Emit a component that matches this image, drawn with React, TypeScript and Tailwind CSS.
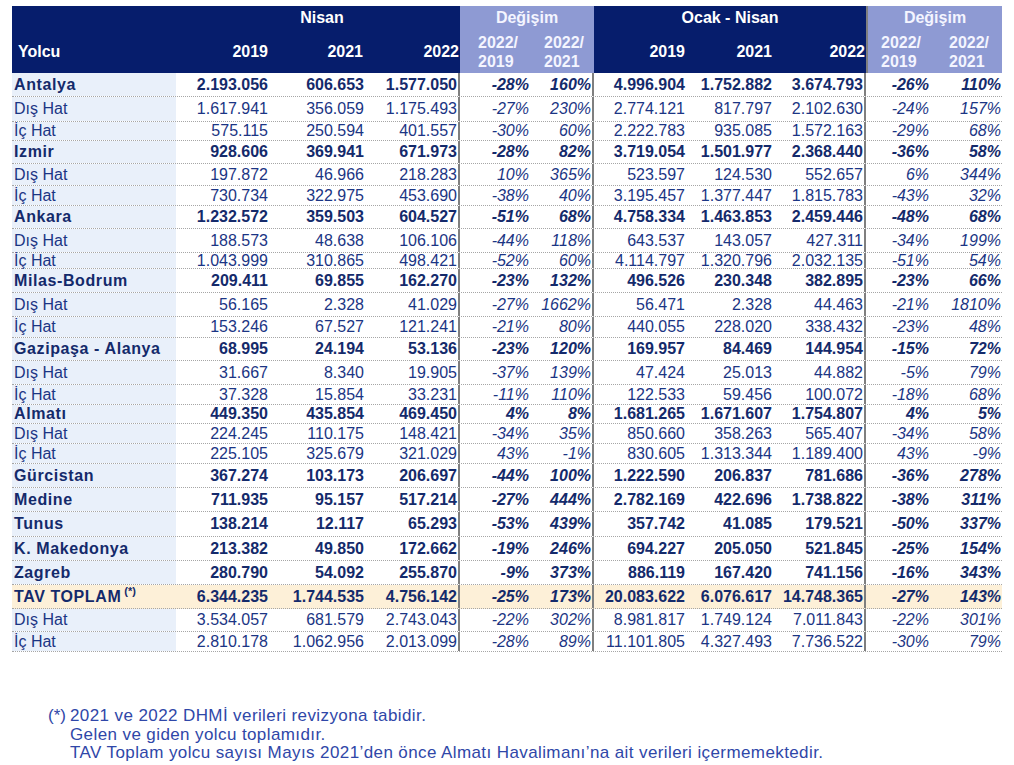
const ROWS: [string, boolean, number, string[]][] = [
  ["Antalya", true, 24, ["2.193.056", "606.653", "1.577.050", "-28%", "160%", "4.996.904", "1.752.882", "3.674.793", "-26%", "110%"]],
  ["Dış Hat", false, 25, ["1.617.941", "356.059", "1.175.493", "-27%", "230%", "2.774.121", "817.797", "2.102.630", "-24%", "157%"]],
  ["İç Hat", false, 19, ["575.115", "250.594", "401.557", "-30%", "60%", "2.222.783", "935.085", "1.572.163", "-29%", "68%"]],
  ["Izmir", true, 23, ["928.606", "369.941", "671.973", "-28%", "82%", "3.719.054", "1.501.977", "2.368.440", "-36%", "58%"]],
  ["Dış Hat", false, 22, ["197.872", "46.966", "218.283", "10%", "365%", "523.597", "124.530", "552.657", "6%", "344%"]],
  ["İç Hat", false, 20, ["730.734", "322.975", "453.690", "-38%", "40%", "3.195.457", "1.377.447", "1.815.783", "-43%", "32%"]],
  ["Ankara", true, 23, ["1.232.572", "359.503", "604.527", "-51%", "68%", "4.758.334", "1.463.853", "2.459.446", "-48%", "68%"]],
  ["Dış Hat", false, 24, ["188.573", "48.638", "106.106", "-44%", "118%", "643.537", "143.057", "427.311", "-34%", "199%"]],
  ["İç Hat", false, 16, ["1.043.999", "310.865", "498.421", "-52%", "60%", "4.114.797", "1.320.796", "2.032.135", "-51%", "54%"]],
  ["Milas-Bodrum", true, 24, ["209.411", "69.855", "162.270", "-23%", "132%", "496.526", "230.348", "382.895", "-23%", "66%"]],
  ["Dış Hat", false, 24, ["56.165", "2.328", "41.029", "-27%", "1662%", "56.471", "2.328", "44.463", "-21%", "1810%"]],
  ["İç Hat", false, 21, ["153.246", "67.527", "121.241", "-21%", "80%", "440.055", "228.020", "338.432", "-23%", "48%"]],
  ["Gazipaşa - Alanya", true, 23, ["68.995", "24.194", "53.136", "-23%", "120%", "169.957", "84.469", "144.954", "-15%", "72%"]],
  ["Dış Hat", false, 24, ["31.667", "8.340", "19.905", "-37%", "139%", "47.424", "25.013", "44.882", "-5%", "79%"]],
  ["İç Hat", false, 20, ["37.328", "15.854", "33.231", "-11%", "110%", "122.533", "59.456", "100.072", "-18%", "68%"]],
  ["Almatı", true, 19, ["449.350", "435.854", "469.450", "4%", "8%", "1.681.265", "1.671.607", "1.754.807", "4%", "5%"]],
  ["Dış Hat", false, 20, ["224.245", "110.175", "148.421", "-34%", "35%", "850.660", "358.263", "565.407", "-34%", "58%"]],
  ["İç Hat", false, 20, ["225.105", "325.679", "321.029", "43%", "-1%", "830.605", "1.313.344", "1.189.400", "43%", "-9%"]],
  ["Gürcistan", true, 24, ["367.274", "103.173", "206.697", "-44%", "100%", "1.222.590", "206.837", "781.686", "-36%", "278%"]],
  ["Medine", true, 24, ["711.935", "95.157", "517.214", "-27%", "444%", "2.782.169", "422.696", "1.738.822", "-38%", "311%"]],
  ["Tunus", true, 25, ["138.214", "12.117", "65.293", "-53%", "439%", "357.742", "41.085", "179.521", "-50%", "337%"]],
  ["K. Makedonya", true, 24, ["213.382", "49.850", "172.662", "-19%", "246%", "694.227", "205.050", "521.845", "-25%", "154%"]],
  ["Zagreb", true, 24, ["280.790", "54.092", "255.870", "-9%", "373%", "886.119", "167.420", "741.156", "-16%", "343%"]],
  ["TAV TOPLAM", true, 24, ["6.344.235", "1.744.535", "4.756.142", "-25%", "173%", "20.083.622", "6.076.617", "14.748.365", "-27%", "143%"]],
  ["Dış Hat", false, 23, ["3.534.057", "681.579", "2.743.043", "-22%", "302%", "8.981.817", "1.749.124", "7.011.843", "-22%", "301%"]],
  ["İç Hat", false, 20, ["2.810.178", "1.062.956", "2.013.099", "-28%", "89%", "11.101.805", "4.327.493", "7.736.522", "-30%", "79%"]],
]

// widths + which cells carry the grey column rule
const COLS = [
  { w: "w-[93px]", rule: false, pct: false },
  { w: "w-[96px]", rule: false, pct: false },
  { w: "w-[95px]", rule: true, pct: false },
  { w: "w-[70px]", rule: false, pct: true },
  { w: "w-[64px]", rule: true, pct: true },
  { w: "w-[92px]", rule: false, pct: false },
  { w: "w-[87px]", rule: false, pct: false },
  { w: "w-[93px]", rule: true, pct: false },
  { w: "w-[64px]", rule: false, pct: true },
  { w: "w-[72px]", rule: false, pct: true },
]

function Ratio({ pad, w, label }: { pad: string; w: string; label: string }) {
  return (
    <div className={`${w} flex items-center`}>
      <div className={`${pad} text-left leading-[19px]`}>
        2022/
        <br />
        {label}
      </div>
    </div>
  )
}

function Header() {
  return (
    <div className="flex h-[67px] font-bold text-[16px] text-white">
      <div className="flex w-[164px] flex-col bg-[#061d6c]">
        <div className="h-[24px]" />
        <div className="flex flex-1 items-center pl-[6px]">Yolcu</div>
      </div>
      <div className="flex w-[284px] flex-col bg-[#061d6c]">
        <div className="flex h-[24px] items-center justify-center pl-[8px]">Nisan</div>
        <div className="flex flex-1 items-center text-right">
          <div className="w-[93px] pr-[1px]">2019</div>
          <div className="w-[96px] pr-[2px]">2021</div>
          <div className="w-[95px] pr-[1px]">2022</div>
        </div>
      </div>
      <div className="flex w-[134px] flex-col bg-[#8e9ad3] text-[#f4f5ff]">
        <div className="flex h-[24px] items-center justify-center">Değişim</div>
        <div className="flex flex-1">
          <Ratio w="w-[70px]" pad="pl-[18px]" label="2019" />
          <Ratio w="w-[64px]" pad="pl-[14px]" label="2021" />
        </div>
      </div>
      <div className="flex w-[272px] flex-col bg-[#061d6c]">
        <div className="flex h-[24px] items-center justify-center">Ocak - Nisan</div>
        <div className="flex flex-1 items-center text-right">
          <div className="w-[92px] pr-[1px]">2019</div>
          <div className="w-[87px] pr-[1px]">2021</div>
          <div className="w-[93px] pr-[1px]">2022</div>
        </div>
      </div>
      <div className="flex w-[136px] flex-col border-l-2 border-[#7f7f7f] bg-[#8e9ad3] text-[#f4f5ff]">
        <div className="flex h-[24px] items-center justify-center">Değişim</div>
        <div className="flex flex-1">
          <Ratio w="w-[62px]" pad="pl-[13px]" label="2019" />
          <Ratio w="w-[72px]" pad="pl-[19px]" label="2021" />
        </div>
      </div>
    </div>
  )
}

function Row({ name, bold, h, vals }: { name: string; bold: boolean; h: number; vals: string[] }) {
  const total = name === "TAV TOPLAM"
  return (
    <div
      className={`flex border-b border-dotted border-[#a6a6a6] text-[16px] leading-none ${total ? "bg-[#fdf0d8]" : ""}`}
      style={{ height: h }}
    >
      <div
        className={`flex w-[164px] items-center whitespace-nowrap pl-[2px] ${total ? "" : "bg-[#e9f0fa]"} ${bold ? "font-bold tracking-[0.6px] text-[#142a6b]" : "text-[#1b3584]"}`}
      >
        {name}
        {total && <sup className="ml-[3px] text-[11px] tracking-normal">(*)</sup>}
      </div>
      {vals.map((v, i) => {
        const c = COLS[i]
        return (
          <div
            key={i}
            className={`${c.w} flex items-center justify-end whitespace-nowrap pr-[1px] ${c.rule ? "border-r-2 border-[#7f7f7f]" : ""} ${c.pct ? "italic" : ""} ${bold ? "font-bold text-[#142a6b]" : "text-[#1b3584]"}`}
          >
            {v}
          </div>
        )
      })}
    </div>
  )
}

export default function App() {
  return (
    <div className="h-[765px] w-[1014px] bg-white pl-[12px] pt-[6px] font-['Liberation_Sans',Arial,sans-serif]">
      <div className="w-[990px]">
        <Header />
        {ROWS.map(([name, bold, h, vals], i) => (
          <Row key={i} name={name} bold={bold} h={h} vals={vals} />
        ))}
      </div>
      <div className="mt-[55px] pl-[36px] text-[17px] leading-[18.5px] tracking-[0.4px] text-[#2f47a8]">
        <div className="flex">
          <span className="w-[22px] tracking-normal">(*)</span>
          <span>2021 ve 2022 DHMİ verileri revizyona tabidir.</span>
        </div>
        <div className="pl-[22px]">Gelen ve giden yolcu toplamıdır.</div>
        <div className="pl-[22px]">
          TAV Toplam yolcu sayısı Mayıs 2021’den önce Almatı Havalimanı’na ait verileri içermemektedir.
        </div>
      </div>
    </div>
  )
}
